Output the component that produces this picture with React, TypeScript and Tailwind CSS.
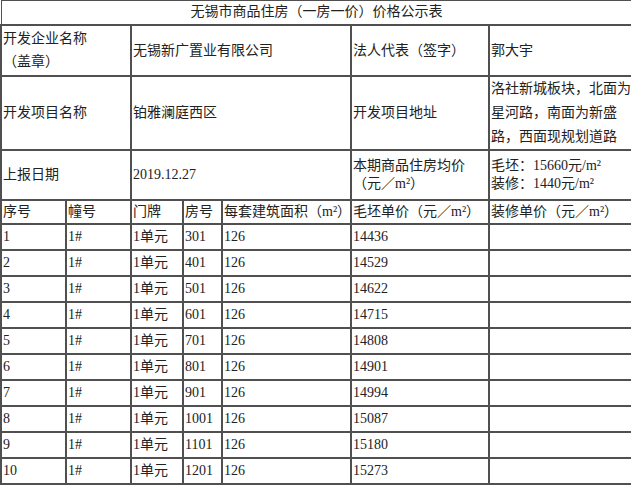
import React from "react";

const rows = [
  ["1", "301", "14436"],
  ["2", "401", "14529"],
  ["3", "501", "14622"],
  ["4", "601", "14715"],
  ["5", "701", "14808"],
  ["6", "801", "14901"],
  ["7", "901", "14994"],
  ["8", "1001", "15087"],
  ["9", "1101", "15180"],
  ["10", "1201", "15273"],
];

const cell = "border-2 border-[#505050] p-0 pl-px align-middle text-left";

export default function App() {
  return (
    <div
      className="w-[631px] h-[488px] bg-white text-[#222] text-[14px] overflow-hidden"
      style={{ fontFamily: '"Liberation Serif", "Noto Sans CJK SC", serif' }}
    >
      <table className="w-[631px] table-fixed border-collapse">
        <colgroup>
          <col className="w-[65px]" />
          <col className="w-[65px]" />
          <col className="w-[52px]" />
          <col className="w-[39px]" />
          <col className="w-[129px]" />
          <col className="w-[138px]" />
          <col className="w-[143px]" />
        </colgroup>
        <tbody>
          <tr className="h-[24px]">
            <td colSpan={7} className="border border-[#505050] border-b-2 p-0 text-center align-middle leading-[22px]">
              无锡市商品住房（一房一价）价格公示表
            </td>
          </tr>
          <tr className="h-[51px]">
            <td colSpan={2} className={cell + " leading-[23px]"}>
              开发企业名称
              <br />
              （盖章）
            </td>
            <td colSpan={3} className={cell + " leading-[23px]"}>
              无锡新广置业有限公司
            </td>
            <td className={cell + " leading-[23px]"}>法人代表（签字）</td>
            <td className={cell + " leading-[23px]"}>郭大宇</td>
          </tr>
          <tr className="h-[71px]">
            <td colSpan={2} className={cell}>开发项目名称</td>
            <td colSpan={3} className={cell}>铂雅澜庭西区</td>
            <td className={cell}>开发项目地址</td>
            <td className={cell + " leading-[24px]"}>
              洛社新城板块，北面为星河路，南面为新盛路，西面现规划道路
            </td>
          </tr>
          <tr className="h-[50px]">
            <td colSpan={2} className={cell}>上报日期</td>
            <td colSpan={3} className={cell}>2019.12.27</td>
            <td className={cell + " leading-[18px]"}>
              本期商品住房均价
              <br />
              （元／m²）
            </td>
            <td className={cell + " leading-[18px] whitespace-nowrap"}>
              毛坯：15660元/m²
              <br />
              装修：1440元/m²
            </td>
          </tr>
          <tr className="h-[24px] whitespace-nowrap">
            <td className={cell}>序号</td>
            <td className={cell}>幢号</td>
            <td className={cell}>门牌</td>
            <td className={cell}>房号</td>
            <td className={cell}>每套建筑面积（m²）</td>
            <td className={cell}>毛坯单价（元／m²）</td>
            <td className={cell}>装修单价（元／m²）</td>
          </tr>
          {rows.map(([n, room, price]) => (
            <tr key={n} className="h-[26px] whitespace-nowrap">
              <td className={cell}>{n}</td>
              <td className={cell}>1#</td>
              <td className={cell}>1单元</td>
              <td className={cell}>{room}</td>
              <td className={cell}>126</td>
              <td className={cell}>{price}</td>
              <td className={cell}></td>
            </tr>
          ))}
        </tbody>
      </table>
    </div>
  );
}
